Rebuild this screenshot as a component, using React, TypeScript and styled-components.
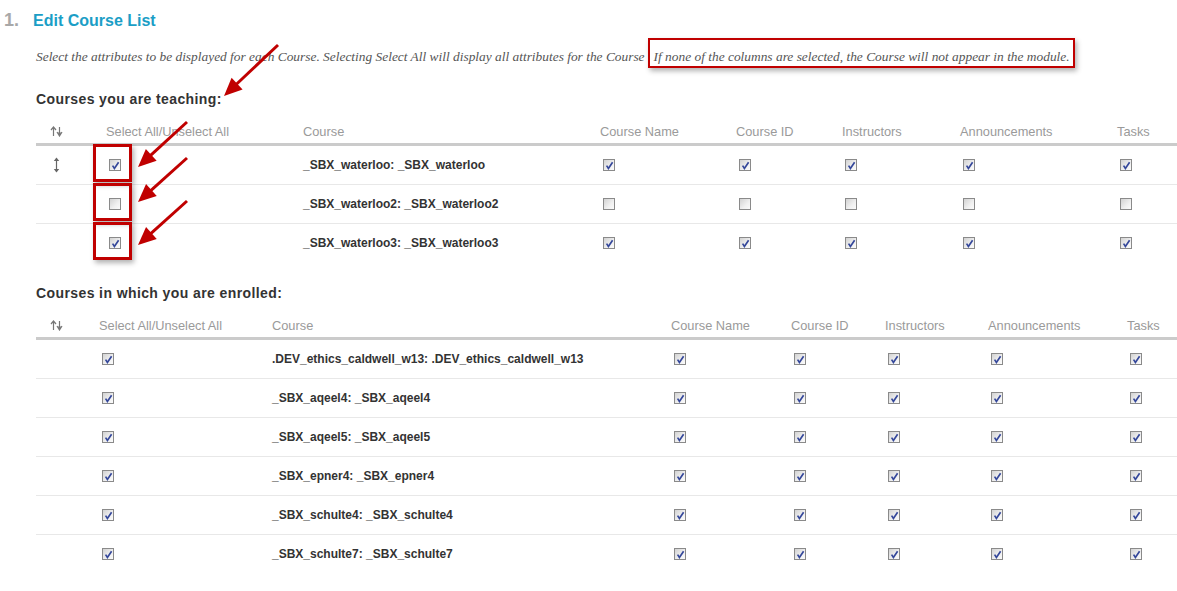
import React from 'react';
import styled, { createGlobalStyle } from 'styled-components';

const Global = createGlobalStyle`
  html, body { margin: 0; padding: 0; background: #fff; }
  body { font-family: "Liberation Sans", Arial, sans-serif; color: #333; }
`;

const Page = styled.div`
  position: relative;
  width: 1177px;
  height: 591px;
  overflow: hidden;
`;

const TitleRow = styled.div`
  display: flex;
  align-items: baseline;
  margin-top: 11px;
  padding-left: 4px;
  line-height: 18px;
`;

const StepNum = styled.span`
  width: 29px;
  font-size: 18px;
  font-weight: bold;
  color: #a8a8a8;
`;

const Title = styled.h1`
  margin: 0;
  font-size: 16px;
  font-weight: bold;
  color: #1b9ec6;
`;

const Body = styled.div`
  padding-left: 36px;
`;

const Desc = styled.p`
  margin: 19px 0 0;
  font-family: "Liberation Serif", "Times New Roman", serif;
  font-style: italic;
  font-size: 13.4px;
  line-height: 16px;
  color: #555;
  white-space: nowrap;
`;

const Highlight = styled.span`
  position: relative;
  margin-left: 9px;
  &::after {
    content: '';
    position: absolute;
    left: -6px;
    right: -5px;
    top: -11px;
    bottom: -4px;
    border: 2px solid #c00000;
    box-shadow: 2px 3px 5px rgba(0, 0, 0, 0.3);
    pointer-events: none;
  }
`;

const SectionHeading = styled.h2<{ $top: number }>`
  margin: ${(p) => p.$top}px 0 11px;
  font-size: 14px;
  letter-spacing: 0.4px;
  font-weight: bold;
  line-height: 16px;
  color: #333;
`;

const Table = styled.div<{ $cols: string }>`
  display: grid;
  grid-template-columns: ${(p) => p.$cols};
`;

const HeadCell = styled.div`
  height: 28px;
  padding-top: 1px;
  box-sizing: border-box;
  display: flex;
  align-items: center;
  border-bottom: 3px solid #cbcbcb;
  font-size: 12.8px;
  color: #9a9a9a;
  white-space: nowrap;
`;

const SortHeadCell = styled(HeadCell)`
  padding-left: 14px;
`;

const Cell = styled.div<{ $last?: boolean }>`
  height: 38px;
  display: flex;
  align-items: center;
  border-bottom: 1px solid ${(p) => (p.$last ? 'transparent' : '#e8e8e8')};
  font-size: 12px;
  white-space: nowrap;
`;

const SortCell = styled(Cell)`
  padding-left: 17px;
`;

const CourseCell = styled(Cell)`
  font-weight: bold;
  color: #333;
`;

const BoxWrap = styled.span<{ $marked?: boolean }>`
  position: relative;
  display: inline-flex;
  margin-left: 3px;
  &::after {
    content: '';
    display: ${(p) => (p.$marked ? 'block' : 'none')};
    position: absolute;
    left: -16px;
    right: -11px;
    top: -15px;
    bottom: -11px;
    border: 3px solid #c00000;
    box-shadow: 2px 3px 5px rgba(0, 0, 0, 0.3);
    pointer-events: none;
  }
`;

const Box = styled.span`
  width: 10px;
  height: 10px;
  border: 1px solid #8a8a8a;
  background: linear-gradient(135deg, #d2d2d2 0%, #f0f0f0 60%, #fbfbfb 100%);
  display: inline-flex;
  align-items: center;
  justify-content: center;
`;

const Overlay = styled.svg`
  position: absolute;
  left: 0;
  top: 0;
  pointer-events: none;
`;

const CheckBox: React.FC<{ checked: boolean; marked?: boolean }> = ({ checked, marked }) => (
  <BoxWrap $marked={marked}>
    <Box>
      {checked && (
        <svg width="9" height="9" viewBox="0 0 9 9">
          <path d="M1.6 4.6 L3.4 7.4 L7.6 1.2" fill="none" stroke="#34479a" strokeWidth="1.7" />
        </svg>
      )}
    </Box>
  </BoxWrap>
);

const SortHeadIcon = () => (
  <svg width="13" height="11" viewBox="0 0 13 11">
    <path d="M3.5 10 V1.5 M1 4 L3.5 1 L6 4" fill="none" stroke="#777" strokeWidth="1.2" />
    <path d="M9.5 1 V8.5 M7 6 L9.5 10 L12 6" fill="none" stroke="#777" strokeWidth="1.2" />
    <path d="M7.5 6.5 L9.5 10 L11.5 6.5 Z" fill="#777" />
  </svg>
);

const HandleIcon = () => (
  <svg width="7" height="16" viewBox="0 0 7 16">
    <path d="M3.5 1.5 V14.5" stroke="#666" strokeWidth="1.2" />
    <path d="M0.8 4 L3.5 0.5 L6.2 4 Z" fill="#666" />
    <path d="M0.8 12 L3.5 15.5 L6.2 12 Z" fill="#666" />
  </svg>
);

const attrs = ['Course Name', 'Course ID', 'Instructors', 'Announcements', 'Tasks'];

type Row = { name: string; checked: boolean; handle?: boolean; marked?: boolean };

const teaching: Row[] = [
  { name: '_SBX_waterloo: _SBX_waterloo', checked: true, handle: true, marked: true },
  { name: '_SBX_waterloo2: _SBX_waterloo2', checked: false, marked: true },
  { name: '_SBX_waterloo3: _SBX_waterloo3', checked: true, marked: true },
];

const enrolled: Row[] = [
  '.DEV_ethics_caldwell_w13: .DEV_ethics_caldwell_w13',
  '_SBX_aqeel4: _SBX_aqeel4',
  '_SBX_aqeel5: _SBX_aqeel5',
  '_SBX_epner4: _SBX_epner4',
  '_SBX_schulte4: _SBX_schulte4',
  '_SBX_schulte7: _SBX_schulte7',
].map((name) => ({ name, checked: true }));

const CourseTable: React.FC<{ cols: string; rows: Row[] }> = ({ cols, rows }) => (
  <Table $cols={cols}>
    <SortHeadCell>
      <SortHeadIcon />
    </SortHeadCell>
    <HeadCell>Select All/Unselect All</HeadCell>
    <HeadCell>Course</HeadCell>
    {attrs.map((a) => (
      <HeadCell key={a}>{a}</HeadCell>
    ))}
    {rows.map((r, i) => {
      const last = i === rows.length - 1;
      return (
        <React.Fragment key={r.name}>
          <SortCell $last={last}>{r.handle && <HandleIcon />}</SortCell>
          <Cell $last={last}>
            <CheckBox checked={r.checked} marked={r.marked} />
          </Cell>
          <CourseCell $last={last}>{r.name}</CourseCell>
          {attrs.map((a) => (
            <Cell key={a} $last={last}>
              <CheckBox checked={r.checked} />
            </Cell>
          ))}
        </React.Fragment>
      );
    })}
  </Table>
);

const arrows = [
  { x1: 278, y1: 45, x2: 224, y2: 96 },
  { x1: 187, y1: 122, x2: 138, y2: 167 },
  { x1: 187, y1: 158, x2: 138, y2: 202 },
  { x1: 187, y1: 201, x2: 138, y2: 245 },
];

function arrowParts(a: { x1: number; y1: number; x2: number; y2: number }) {
  const dx = a.x2 - a.x1;
  const dy = a.y2 - a.y1;
  const L = Math.hypot(dx, dy);
  const ux = dx / L;
  const uy = dy / L;
  const nx = -uy;
  const ny = ux;
  const hl = 18;
  const hw = 8;
  const bx = a.x2 - ux * hl;
  const by = a.y2 - uy * hl;
  return {
    line: { x1: a.x1, y1: a.y1, x2: bx + ux * 2, y2: by + uy * 2 },
    head: `${a.x2},${a.y2} ${bx + nx * hw},${by + ny * hw} ${bx - nx * hw},${by - ny * hw}`,
  };
}

export default function App() {
  return (
    <Page>
      <Global />
      <TitleRow>
        <StepNum>1.</StepNum>
        <Title>Edit Course List</Title>
      </TitleRow>
      <Body>
        <Desc>
          Select the attributes to be displayed for each Course. Selecting Select All will display all attributes for the Course
          <Highlight>If none of the columns are selected, the Course will not appear in the module.</Highlight>
        </Desc>
        <SectionHeading $top={26}>Courses you are teaching:</SectionHeading>
        <CourseTable cols="70px 197px 297px 136px 106px 118px 157px 1fr" rows={teaching} />
        <SectionHeading $top={22}>Courses in which you are enrolled:</SectionHeading>
        <CourseTable cols="63px 173px 399px 120px 94px 103px 139px 1fr" rows={enrolled} />
      </Body>
      <Overlay width="1177" height="300" viewBox="0 0 1177 300">
        {arrows.map((a, i) => {
          const p = arrowParts(a);
          return (
            <g key={i}>
              <line {...p.line} stroke="#c00000" strokeWidth="3" />
              <polygon points={p.head} fill="#c00000" />
            </g>
          );
        })}
      </Overlay>
    </Page>
  );
}
